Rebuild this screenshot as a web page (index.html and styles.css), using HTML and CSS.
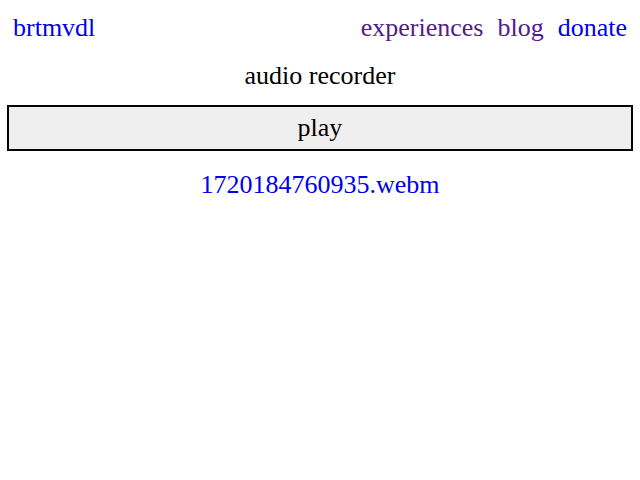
FILE: index.html
```html
<!DOCTYPE html>
<html>
<head>
<meta charset="utf-8">
<link rel="stylesheet" href="styles.css">
</head>
<body>
<header class="top">
  <a class="link" href="#">brtmvdl</a>
  <nav class="nav">
    <a class="link visited" href="#">experiences</a>
    <a class="link visited" href="#">blog</a>
    <a class="link" href="#">donate</a>
  </nav>
</header>
<main class="main">
  <div class="title">audio recorder</div>
  <button class="btn">play</button>
  <div class="files"><a class="link" href="#">1720184760935.webm</a></div>
</main>
</body>
</html>
```
FILE: styles.css
```css
html, body { margin: 0; padding: 0; background: #fff; }
body {
  font-family: "Liberation Serif", serif;
  font-size: 26px;
  line-height: 30px;
  color: #000;
  padding: 0 7px;
}
.link { color: #0000ee; text-decoration: none; }
.link.visited { color: #551a8b; }
.top {
  display: flex;
  justify-content: space-between;
  align-items: center;
  padding: 13px 6px 0;
  height: 30px;
}
.nav { display: flex; gap: 14px; }
.main { display: flex; flex-direction: column; align-items: center; }
.title { margin-top: 18px; height: 30px; }
.btn {
  box-sizing: border-box;
  width: 100%;
  height: 46px;
  margin-top: 14px;
  background: #efefef;
  border: 2px solid #000;
  font-family: "Liberation Serif", serif;
  font-size: 26px;
  color: #000;
  padding: 0;
}
.files { margin-top: 19px; }
```
